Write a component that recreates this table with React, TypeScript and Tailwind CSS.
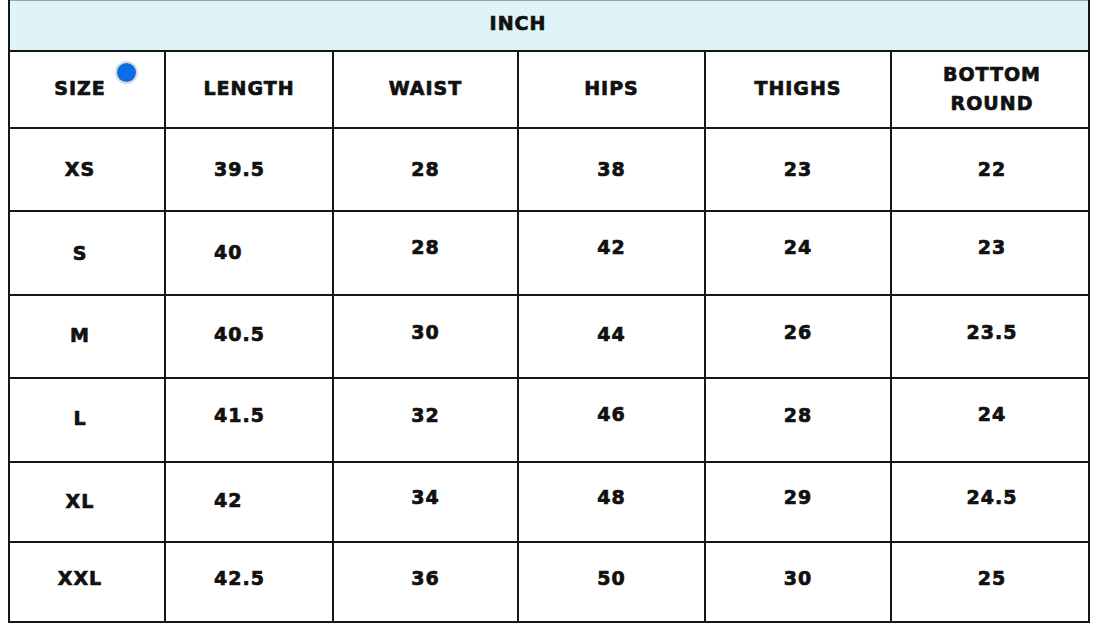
import React from 'react';

const headers = ['SIZE', 'LENGTH', 'WAIST', 'HIPS', 'THIGHS', 'BOTTOM ROUND'];

// each row: values + small vertical nudges copied from the chart image
const rows: { h: string; cells: string[]; shift: string[] }[] = [
  { h: 'h-[83px]', cells: ['XS', '39.5', '28', '38', '23', '22'], shift: ['', '', '', '', '', ''] },
  {
    h: 'h-[84px]',
    cells: ['S', '40', '28', '42', '24', '23'],
    shift: ['', '-translate-y-[1px]', '-translate-y-[6px]', '-translate-y-[6px]', '-translate-y-[6px]', '-translate-y-[6px]'],
  },
  {
    h: 'h-[83px]',
    cells: ['M', '40.5', '30', '44', '26', '23.5'],
    shift: ['-translate-y-[1px]', '-translate-y-[2px]', '-translate-y-[4px]', '-translate-y-[2px]', '-translate-y-[4px]', '-translate-y-[4px]'],
  },
  {
    h: 'h-[84px]',
    cells: ['L', '41.5', '32', '46', '28', '24'],
    shift: ['-translate-y-[2px]', '-translate-y-[5px]', '-translate-y-[5px]', '-translate-y-[6px]', '-translate-y-[5px]', '-translate-y-[6px]'],
  },
  {
    h: 'h-[80px]',
    cells: ['XL', '42', '34', '48', '29', '24.5'],
    shift: ['-translate-y-[1px]', '-translate-y-[2px]', '-translate-y-[5px]', '-translate-y-[5px]', '-translate-y-[5px]', '-translate-y-[5px]'],
  },
  {
    h: 'h-[78px]',
    cells: ['XXL', '42.5', '36', '50', '30', '25'],
    shift: ['-translate-y-[4px]', '-translate-y-[4px]', '-translate-y-[4px]', '-translate-y-[4px]', '-translate-y-[4px]', '-translate-y-[4px]'],
  },
];

// per column: horizontal placement of the values
const colAlign = [
  'justify-center pr-[14px]',
  'justify-start pl-[48px]',
  'justify-center',
  'justify-center',
  'justify-center',
  'justify-center pl-[4px]',
];

const headAlign = [
  'justify-center pr-[14px]',
  'justify-center',
  'justify-center',
  'justify-center',
  'justify-center',
  'justify-center pl-[4px]',
];

const App: React.FC = () => {
  return (
    <div
      className="w-[1101px] h-[631px] bg-white text-[#111] overflow-hidden"
      style={{ fontFamily: '"DejaVu Sans", "Liberation Sans", sans-serif' }}
    >
      <div className="ml-[8px] w-[1082px] border-x-2 border-b-2 border-[#161616] text-[19px] font-bold tracking-[1px] [-webkit-text-stroke:0.7px_#111]">
        <div className="h-[52px] bg-[#def4f8] border-t border-t-[#9aa4a6] border-b-2 border-b-[#161616] flex items-center justify-center pr-[62px]">
          <span className="-translate-y-[2px]">INCH</span>
        </div>

        <div className="grid grid-cols-[156px_168px_185px_187px_186px_196px]">
          {headers.map((t, i) => (
            <div
              key={t}
              className={`relative h-[77px] flex items-center text-center leading-[29px] border-b-2 border-[#161616] ${
                i < 5 ? 'border-r-2' : ''
              } ${headAlign[i]}`}
            >
              {t === 'BOTTOM ROUND' ? (
                <span className="-translate-y-[1px]">
                  BOTTOM
                  <br />
                  ROUND
                </span>
              ) : (
                <span className="-translate-y-[1px]">{t}</span>
              )}
              {i === 0 && (
                <span className="absolute left-[105px] top-[9px] w-[23px] h-[23px] rounded-full bg-[#0b6ee6] border-2 border-[#dcdcdc]" />
              )}
            </div>
          ))}

          {rows.map((r, ri) =>
            r.cells.map((v, ci) => (
              <div
                key={`${ri}-${ci}`}
                className={`${r.h} flex items-center border-[#161616] ${ci < 5 ? 'border-r-2' : ''} ${
                  ri < rows.length - 1 ? 'border-b-2' : ''
                } ${colAlign[ci]}`}
              >
                <span className={r.shift[ci]}>{v}</span>
              </div>
            ))
          )}
        </div>
      </div>
    </div>
  );
};

export default App;
